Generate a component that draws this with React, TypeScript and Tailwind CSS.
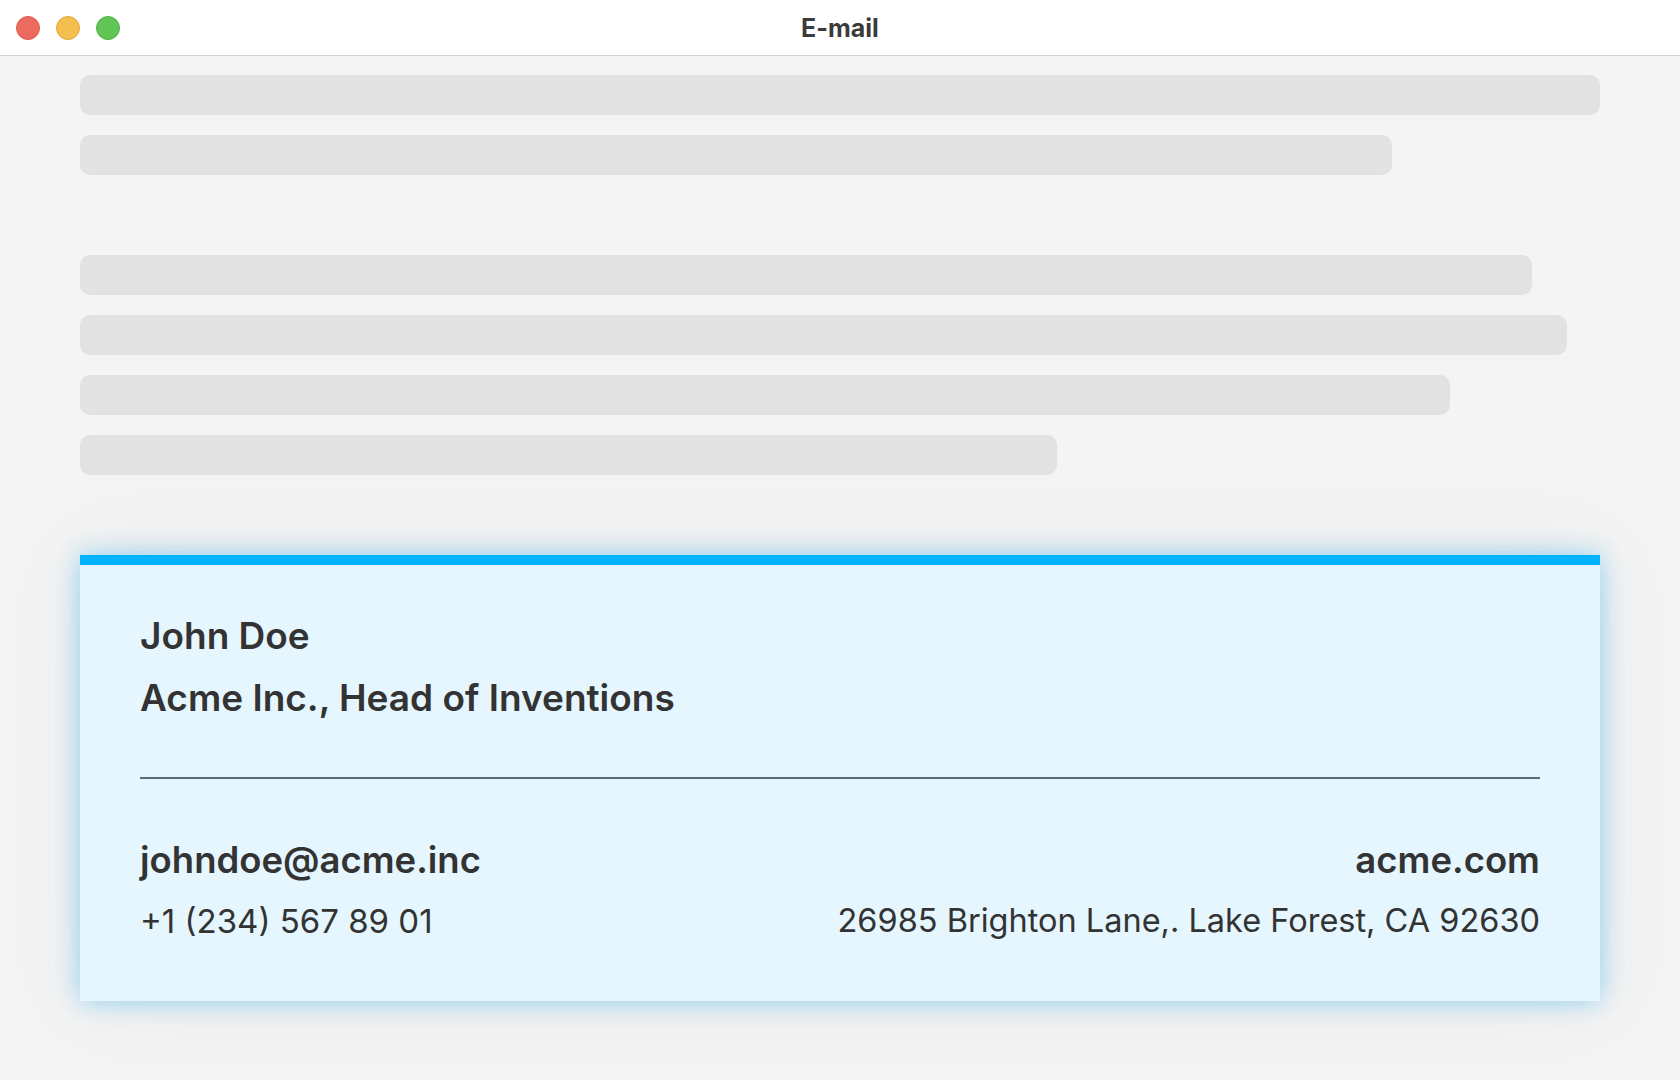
const font = { fontFamily: "Inter, 'Noto Sans', sans-serif" };

function Bar({ width }: { width: string }) {
  return <div className={`h-10 rounded-[10px] bg-[#e2e2e2] ${width}`} />;
}

function TitleBar() {
  return (
    <div className="relative flex h-14 items-center border-b border-[#d3d3d3] bg-white">
      <div className="flex gap-4 pl-4">
        <span className="h-6 w-6 rounded-full border border-[#de5a4f] bg-[#ed6a5e]" />
        <span className="h-6 w-6 rounded-full border border-[#dfa83e] bg-[#f4bf4f]" />
        <span className="h-6 w-6 rounded-full border border-[#53ad47] bg-[#61c554]" />
      </div>
      <div className="pointer-events-none absolute inset-x-0 top-0 flex h-[58px] items-center justify-center text-[25px] font-bold text-[#3b3b3b]">
        E-mail
      </div>
    </div>
  );
}

function Signature() {
  return (
    <div className="border-t-[10px] border-[#00b2ff] bg-[#e5f6fe] px-[60px] pt-10 pb-[56px] text-[#333333] shadow-[0_0_26px_rgba(0,160,240,0.4),0_0_90px_rgba(0,0,0,0.05)]">
      <div className="text-[37px] font-semibold leading-[62px]">
        <div>John Doe</div>
        <div>Acme Inc., Head of Inventions</div>
      </div>
      <div className="mt-12 h-[2px] bg-[#5b6b7a]" />
      <div className="mt-[57px] flex items-center justify-between text-[36.5px] font-semibold leading-[48px]">
        <span>johndoe@acme.inc</span>
        <span>acme.com</span>
      </div>
      <div className="mt-[13px] flex items-center justify-between text-[33px] leading-[48px]">
        <span>+1 (234) 567 89 01</span>
        <span className="text-[32.5px]">26985 Brighton Lane,. Lake Forest, CA 92630</span>
      </div>
    </div>
  );
}

export default function App() {
  return (
    <div className="min-h-[1080px] w-[1680px] bg-[#f4f4f4]" style={font}>
      <TitleBar />
      <div className="px-20 pt-[19px]">
        <div className="flex flex-col gap-5">
          <Bar width="w-[1520px]" />
          <Bar width="w-[1312px]" />
        </div>
        <div className="mt-20 flex flex-col gap-5">
          <Bar width="w-[1452px]" />
          <Bar width="w-[1487px]" />
          <Bar width="w-[1370px]" />
          <Bar width="w-[977px]" />
        </div>
        <div className="mt-20">
          <Signature />
        </div>
      </div>
    </div>
  );
}
